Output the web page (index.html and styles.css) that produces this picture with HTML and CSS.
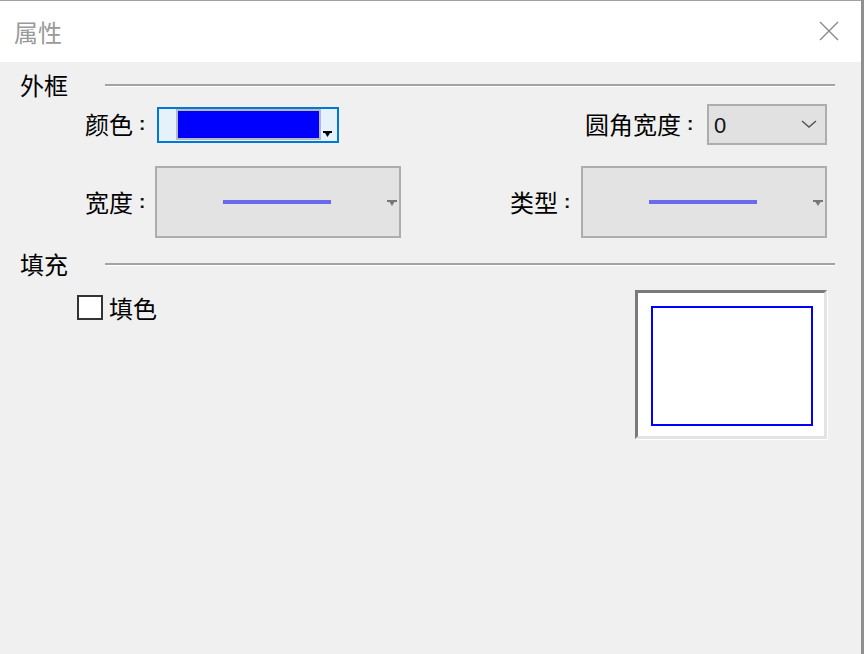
FILE: index.html
```html
<!DOCTYPE html>
<html lang="zh-CN">
<head>
<meta charset="utf-8">
<title>属性</title>
<link rel="stylesheet" href="styles.css">
</head>
<body>
<div class="dialog">
  <header class="titlebar">
    <span class="title">属性</span>
    <span class="close" aria-label="关闭">
      <svg width="20" height="20" viewBox="0 0 20 20"><path d="M1 1 L19 19 M19 1 L1 19" stroke="#8a8a8a" stroke-width="1.4" fill="none"/></svg>
    </span>
  </header>
  <main class="content">
    <div class="section-head">
      <span class="section-label">外框</span>
      <div class="rule"></div>
    </div>

    <div class="row row-top">
      <div class="field">
        <label class="lbl lbl-color">颜色<span class="colon">:</span></label>
        <div class="colorpick">
          <div class="swatch"></div>
          <svg class="dd-arrow" width="9" height="6" viewBox="0 0 9 6"><path d="M0 0 H9 V2 H7 L4.5 6 L2 2 H0 Z" fill="#000"/></svg>
        </div>
      </div>
      <div class="field field-right">
        <label class="lbl lbl-radius">圆角宽度<span class="colon">:</span></label>
        <div class="select">
          <span class="select-val">0</span>
          <svg width="16" height="8" viewBox="0 0 16 8"><polyline points="1,1 8,7 15,1" stroke="#555" stroke-width="1.5" fill="none"/></svg>
        </div>
      </div>
    </div>

    <div class="row row-mid">
      <div class="field">
        <label class="lbl lbl-width">宽度<span class="colon">:</span></label>
        <div class="linebox">
          <div class="sample-line"></div>
          <svg class="gray-arrow" width="10" height="6" viewBox="0 0 10 6"><path d="M0 0 H10 V2 H7.5 L5 6 L2.5 2 H0 Z" fill="#777"/></svg>
        </div>
      </div>
      <div class="field field-right">
        <label class="lbl lbl-type">类型<span class="colon">:</span></label>
        <div class="linebox">
          <div class="sample-line"></div>
          <svg class="gray-arrow" width="10" height="6" viewBox="0 0 10 6"><path d="M0 0 H10 V2 H7.5 L5 6 L2.5 2 H0 Z" fill="#777"/></svg>
        </div>
      </div>
    </div>

    <div class="section-head section-fill">
      <span class="section-label">填充</span>
      <div class="rule"></div>
    </div>

    <div class="row row-fill">
      <label class="check"><span class="checkbox"></span><span class="check-text">填色</span></label>
      <div class="preview">
        <div class="preview-rect"></div>
      </div>
    </div>
  </main>
</div>
</body>
</html>
```

FILE: styles.css
```css
* { box-sizing: border-box; }

html, body {
  margin: 0;
  padding: 0;
  background: #f0f0f0;
}

body {
  font-family: "Noto Sans CJK SC", "Noto Sans", sans-serif;
  font-size: 24px;
  line-height: 24px;
  color: #000;
}

.dialog {
  width: 864px;
  height: 654px;
  background: #f0f0f0;
  border-right: 3px solid #8f8f8f;
  overflow: hidden;
}

.titlebar {
  height: 62px;
  background: #fff;
  border-top: 1px solid #a0a0a0;
  display: flex;
  align-items: center;
  justify-content: space-between;
  padding: 0 22px 0 14px;
}

.title {
  color: #9a9a9a;
  font-size: 24px;
}

.close {
  display: flex;
  width: 20px;
  height: 20px;
  margin-top: -2px;
}

.content {
  padding-right: 26px;
}

.section-head {
  display: flex;
  align-items: center;
  height: 24px;
  margin-top: 11px;
  padding-left: 20px;
}

.section-fill {
  margin-top: 14px;
}

.section-label {
  width: 85px;
}

.rule {
  flex: 1;
  height: 3px;
  border-top: 2px solid #a3a3a3;
  border-bottom: 1px solid #fff;
}

.row {
  display: flex;
  align-items: center;
  padding-left: 85px;
  padding-right: 8px;
}

.row-top {
  height: 41px;
  margin-top: 7px;
}

.row-mid {
  height: 72px;
  margin-top: 21px;
}

.row-fill {
  align-items: flex-start;
  padding-left: 77px;
  margin-top: 14px;
}

.field {
  display: flex;
  align-items: center;
}

.field-right {
  margin-left: auto;
}

.lbl {
  display: flex;
  align-items: center;
  white-space: nowrap;
}

.colon {
  font-family: "Liberation Sans", sans-serif;
  font-size: 19px;
  font-weight: bold;
  margin-left: 6px;
  color: #111;
}

.lbl-color { width: 72px; margin-top: -2px; }
.lbl-radius { width: 122px; margin-top: -2px; }
.lbl-width { width: 70px; }
.lbl-type { width: 71px; }

.colorpick {
  width: 182px;
  height: 36px;
  border: 2px solid #0078d7;
  background: #e5f1fb;
  display: flex;
  align-items: flex-start;
  padding-left: 17px;
}

.swatch {
  width: 145px;
  height: 31px;
  background: #0000ff;
  border: 2px solid #b9b9b9;
}

.dd-arrow {
  margin-left: 2px;
  margin-top: 22px;
}

.select {
  width: 120px;
  height: 41px;
  border: 2px solid #adadad;
  background: #e1e1e1;
  display: flex;
  align-items: center;
  justify-content: space-between;
  padding: 0 8px 0 5px;
}

.select-val {
  font-family: "Liberation Sans", sans-serif;
  font-size: 22px;
  color: #111;
  margin-top: 3px;
}

.select svg {
  margin-top: -2px;
}

.linebox {
  width: 246px;
  height: 72px;
  border: 2px solid #adadad;
  background: #e3e3e3;
  display: flex;
  align-items: center;
  padding: 0 2px 0 66px;
}

.sample-line {
  width: 108px;
  height: 4px;
  background: #6a6af0;
}

.gray-arrow {
  margin-left: auto;
  margin-top: 2px;
}

.check {
  display: flex;
  align-items: center;
  margin-top: 4px;
}

.checkbox {
  width: 26px;
  height: 25px;
  border: 2px solid #333;
  background: #fff;
}

.check-text {
  margin-left: 6px;
  margin-top: 2px;
}

.preview {
  margin-left: auto;
  width: 192px;
  height: 149px;
  background: #fff;
  border-style: solid;
  border-width: 3px;
  border-color: #7a7a7a #e3e3e3 #e3e3e3 #7a7a7a;
  box-shadow: 1px 1px 0 #fff;
  display: flex;
  padding: 13px 11px 10px 13px;
}

.preview-rect {
  flex: 1;
  border: 2px solid #0000ff;
  background: #fff;
}
```
